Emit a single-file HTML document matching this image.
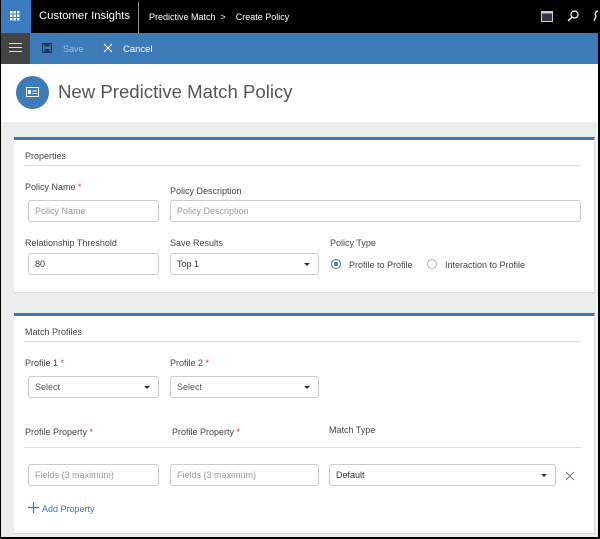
<!DOCTYPE html>
<html><head><meta charset="utf-8"><style>
*{box-sizing:border-box;margin:0;padding:0}
body{width:600px;height:539px;overflow:hidden;font-family:"Liberation Sans",sans-serif;background:#000;position:relative}
.frame{position:absolute;left:1px;top:0;width:597px;height:537px;background:#ededed;overflow:hidden}
.a{position:absolute}
.top{left:0;top:0;width:597px;height:33px;background:#000;color:#fff}
.cmd{left:0;top:33px;width:597px;height:31px;background:#3d7ab8}
.hdr{left:0;top:64px;width:597px;height:58px;background:#fff}
.card{background:#fff;border-top:3px solid #3a75b9;border-right:1px solid #ddd;border-bottom:1px solid #ddd}
.lbl{font-size:9px;color:#444;position:absolute}
.req{color:#e33}
.inp{position:absolute;height:22px;border:1px solid #ccc;border-radius:3px;font-size:9px;color:#999;padding:6px 6px;line-height:9px;background:#fff}
.inp.v{color:#333}
.arr{position:absolute;right:8px;top:9px;border-left:3px solid transparent;border-right:3px solid transparent;border-top:3px solid #333}
.hr{position:absolute;height:1px;background:#ddd}
</style></head><body>
<div class="frame">
<div class="a top">
 <div class="a" style="left:0;top:0;width:30px;height:33px;background:#3c7bbf"></div>
 <svg class="a" style="left:9px;top:11px" width="10" height="10"><g fill="#fff"><rect x="0" y="0" width="2.5" height="2.5"/><rect x="3.5" y="0" width="2.5" height="2.5"/><rect x="7" y="0" width="2.5" height="2.5"/><rect x="0" y="3.5" width="2.5" height="2.5"/><rect x="3.5" y="3.5" width="2.5" height="2.5"/><rect x="7" y="3.5" width="2.5" height="2.5"/><rect x="0" y="7" width="2.5" height="2.5"/><rect x="3.5" y="7" width="2.5" height="2.5"/><rect x="7" y="7" width="2.5" height="2.5"/></g></svg>
 <div class="a" style="left:38px;top:10px;font-size:11.3px">Customer Insights</div>
 <div class="a" style="left:137px;top:2px;width:1px;height:31px;background:#888"></div>
 <div class="a" style="left:148px;top:12px;font-size:9px">Predictive Match &nbsp;&gt;&nbsp;&nbsp;&nbsp; Create Policy</div>
 <svg class="a" style="left:540px;top:11px" width="12" height="11"><rect x="0.5" y="0.5" width="11" height="10" fill="#334" stroke="#ccd"/><rect x="0.5" y="0.5" width="11" height="2" fill="#ccd"/></svg>
 <svg class="a" style="left:566px;top:10px" width="12" height="12"><circle cx="7.5" cy="4.5" r="3.5" fill="none" stroke="#fff" stroke-width="1.2"/><line x1="5" y1="7" x2="1" y2="11" stroke="#fff" stroke-width="1.3"/></svg>
 <svg class="a" style="left:592px;top:10px" width="6" height="12"><path d="M5 1 A3 3 0 0 0 3 6 L1 11" fill="none" stroke="#fff" stroke-width="1.2"/></svg>
</div>
<div class="a cmd">
 <div class="a" style="left:0;top:0;width:29px;height:31px;background:#444"></div>
 <div class="a" style="left:8px;top:10px;width:13px;height:1px;background:#ddd;box-shadow:0 4px 0 #ddd,0 8px 0 #ddd"></div>
 <svg class="a" style="left:41px;top:10px" width="10" height="10"><rect x="0.5" y="0.5" width="9" height="9" fill="none" stroke="#1c3050" stroke-width="1.2"/><rect x="2.5" y="0.5" width="5" height="3" fill="#1c3050"/><rect x="2.5" y="6" width="5" height="3.5" fill="#1c3050"/></svg>
 <div class="a" style="left:62px;top:11px;font-size:9px;color:#a6c0de">Save</div>
 <svg class="a" style="left:102px;top:10px" width="10" height="10"><path d="M1 1L9 9M9 1L1 9" stroke="#fff" stroke-width="1.1"/></svg>
 <div class="a" style="left:122px;top:11px;font-size:9.5px;color:#fff">Cancel</div>
</div>
<div class="a hdr">
 <div class="a" style="left:15px;top:12px;width:33px;height:33px;border-radius:50%;background:#3d7ab8"></div>
 <svg class="a" style="left:25px;top:23px" width="13" height="10"><rect x="0.5" y="0.5" width="12" height="9" fill="none" stroke="#fff"/><rect x="2" y="3" width="3" height="4" fill="#fff"/><line x1="6.5" y1="4" x2="11" y2="4" stroke="#fff"/><line x1="6.5" y1="6.5" x2="11" y2="6.5" stroke="#fff"/></svg>
 <div class="a" style="left:57px;top:17px;font-size:18.6px;color:#555">New Predictive Match Policy</div>
</div>

<div class="a card" style="left:13px;top:137px;width:581px;height:156px">
 <div class="lbl" style="left:11px;top:11px">Properties</div>
 <div class="hr" style="left:10px;top:25px;width:557px"></div>
 <div class="lbl" style="left:11px;top:42px">Policy Name <span class="req">*</span></div>
 <div class="lbl" style="left:156px;top:46px">Policy Description</div>
 <div class="inp" style="left:14px;top:60px;width:131px">Policy Name</div>
 <div class="inp" style="left:156px;top:60px;width:411px">Policy Description</div>
 <div class="lbl" style="left:11px;top:98px">Relationship Threshold</div>
 <div class="lbl" style="left:156px;top:98px">Save Results</div>
 <div class="lbl" style="left:316px;top:98px">Policy Type</div>
 <div class="inp v" style="left:14px;top:113px;width:131px">80</div>
 <div class="inp v" style="left:156px;top:113px;width:149px">Top 1<div class="arr"></div></div>
 <div class="a" style="left:317px;top:119px;width:10px;height:10px;border:1px solid #3a75b9;border-radius:50%"><div class="a" style="left:2px;top:2px;width:4px;height:4px;border-radius:50%;background:#3a75b9"></div></div>
 <div class="lbl" style="left:335px;top:120px">Profile to Profile</div>
 <div class="a" style="left:413px;top:119px;width:10px;height:10px;border:1px solid #aaa;border-radius:50%"></div>
 <div class="lbl" style="left:431px;top:120px">Interaction to Profile</div>
</div>

<div class="a card" style="left:13px;top:313px;width:581px;height:221px">
 <div class="lbl" style="left:11px;top:11px">Match Profiles</div>
 <div class="hr" style="left:10px;top:25px;width:557px"></div>
 <div class="lbl" style="left:11px;top:42px">Profile 1 <span class="req">*</span></div>
 <div class="lbl" style="left:156px;top:42px">Profile 2 <span class="req">*</span></div>
 <div class="inp v" style="left:14px;top:60px;width:131px;color:#555">Select<div class="arr"></div></div>
 <div class="inp v" style="left:156px;top:60px;width:149px;color:#555">Select<div class="arr"></div></div>
 <div class="lbl" style="left:11px;top:111px">Profile Property <span class="req">*</span></div>
 <div class="lbl" style="left:158px;top:111px">Profile Property <span class="req">*</span></div>
 <div class="lbl" style="left:315px;top:109px">Match Type</div>
 <div class="hr" style="left:10px;top:131px;width:557px"></div>
 <div class="inp" style="left:14px;top:148px;width:131px">Fields (3 maximum)</div>
 <div class="inp" style="left:156px;top:148px;width:149px">Fields (3 maximum)</div>
 <div class="inp v" style="left:315px;top:148px;width:227px">Default<div class="arr"></div></div>
 <svg class="a" style="left:551px;top:155px" width="10" height="10"><path d="M1 1L9 9M9 1L1 9" stroke="#777" stroke-width="1"/></svg>
 <svg class="a" style="left:14px;top:186px" width="11" height="11"><path d="M5.5 0V11M0 5.5H11" stroke="#3a75b9" stroke-width="1.2"/></svg>
 <div class="lbl" style="left:28px;top:188px;color:#3a75b9">Add Property</div>
</div>
</div>
</body></html>
